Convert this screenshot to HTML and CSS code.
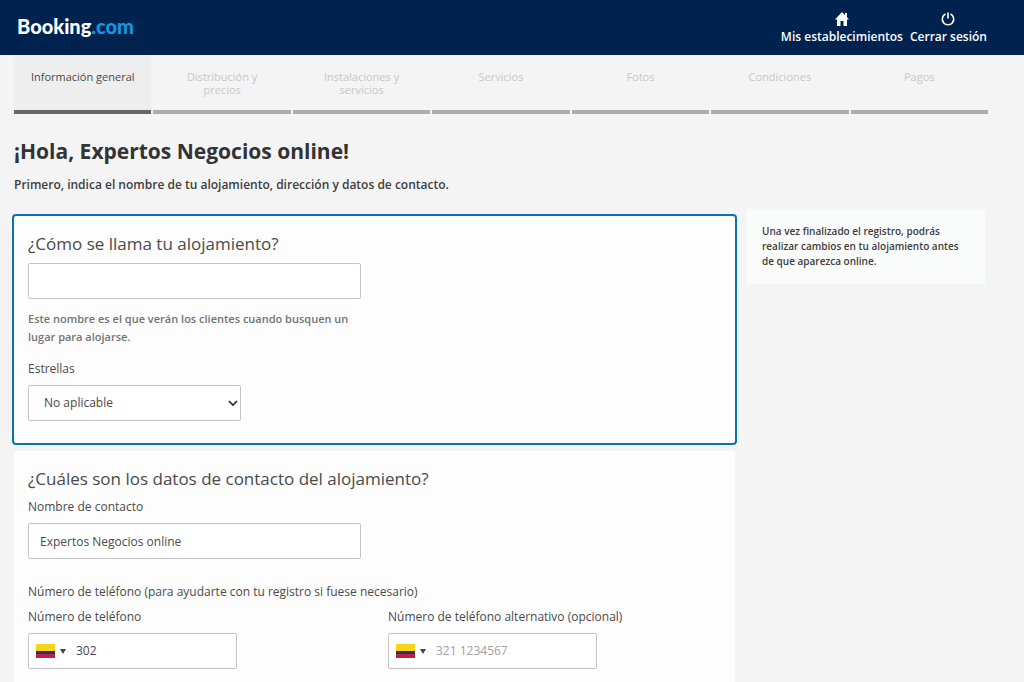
FILE: index.html
```html
<!DOCTYPE html>
<html lang="es">
<head>
<meta charset="utf-8">
<meta name="viewport" content="width=device-width, initial-scale=1">
<title>Booking.com – Información general</title>
<link rel="stylesheet" href="styles.css">
</head>
<body>
<header class="topbar">
  <a class="logo" href="#">Booking<span class="logo-tld">.com</span></a>
  <nav class="account">
    <a class="account-link" href="#">
      <svg class="icon" viewBox="0 0 16 16" aria-hidden="true"><path fill="currentColor" d="M8 1 1 8.500h2V15h3.500v-5h3v5H13V8.500h2l-2-2.200V2h-2v2.200z"/></svg>
      <span>Mis establecimientos</span>
    </a>
    <a class="account-link" href="#">
      <svg class="icon" viewBox="0 0 16 16" aria-hidden="true"><path fill="none" stroke="currentColor" stroke-width="1.600" d="M5.500 3a5.700 5.700 0 1 0 5 0M8 1.500v6"/></svg>
      <span>Cerrar sesión</span>
    </a>
  </nav>
</header>
<nav class="steps">
  <a class="step step-current" href="#" aria-current="step">Información general</a>
  <a class="step" href="#">Distribución y precios</a>
  <a class="step" href="#">Instalaciones y servicios</a>
  <a class="step" href="#">Servicios</a>
  <a class="step" href="#">Fotos</a>
  <a class="step" href="#">Condiciones</a>
  <a class="step" href="#">Pagos</a>
</nav>
<main class="page">
  <h1 class="title">¡Hola, Expertos Negocios online!</h1>
  <p class="intro">Primero, indica el nombre de tu alojamiento, dirección y datos de contacto.</p>
  <div class="columns">
    <form class="cards">
      <section class="card card-active">
        <h2 class="question"><label for="property">¿Cómo se llama tu alojamiento?</label></h2>
        <input class="control wide" id="property" type="text">
        <p class="hint">Este nombre es el que verán los clientes cuando busquen un lugar para alojarse.</p>
        <label class="label" for="stars">Estrellas</label>
        <div class="select-box">
          <select class="control select" id="stars"><option>No aplicable</option><option>1</option><option>2</option><option>3</option><option>4</option><option>5</option></select>
          <svg class="chevron" viewBox="0 0 10 10" aria-hidden="true"><path fill="none" stroke="currentColor" stroke-width="1.600" d="m1 3 4 4 4-4"/></svg>
        </div>
      </section>
      <section class="card">
        <h2 class="question">¿Cuáles son los datos de contacto del alojamiento?</h2>
        <label class="label" for="contact">Nombre de contacto</label>
        <input class="control wide" id="contact" type="text" value="Expertos Negocios online">
        <p class="note">Número de teléfono (para ayudarte con tu registro si fuese necesario)</p>
        <div class="phones">
          <div class="phone">
            <label class="label" for="phone">Número de teléfono</label>
            <div class="phone-box">
              <button class="country" type="button" aria-label="Colombia"><span class="flag"></span><span class="caret"></span></button>
              <input class="phone-input" id="phone" type="tel" value="302">
            </div>
          </div>
          <div class="phone">
            <label class="label" for="phone-alt">Número de teléfono alternativo (opcional)</label>
            <div class="phone-box">
              <button class="country" type="button" aria-label="Colombia"><span class="flag"></span><span class="caret"></span></button>
              <input class="phone-input" id="phone-alt" type="tel" placeholder="321 1234567">
            </div>
          </div>
        </div>
      </section>
    </form>
    <aside class="tip">Una vez finalizado el registro, podrás realizar cambios en tu alojamiento antes de que aparezca online.</aside>
  </div>
</main>
</body>
</html>
```
FILE: styles.css
```css
* {
  box-sizing: border-box;
}

body {
  margin: 0;
  background: #f4f4f4;
  color: #4a4a4a;
  font: 12px/18px "Open Sans", "Noto Sans", sans-serif;
}

h1, h2, p {
  margin: 0;
}

a {
  color: inherit;
  text-decoration: none;
}

.topbar {
  display: flex;
  justify-content: space-between;
  align-items: center;
  min-height: 55px;
  padding: 0 37px 0 17px;
  background: #00224f;
  color: #fff;
}

.logo {
  padding-bottom: 3px;
  font: 900 20px/24px Lato, sans-serif;
}

.logo-tld {
  color: #0d9be5;
}

.account {
  display: flex;
  gap: 7px;
  padding-top: 2px;
}

.account-link {
  display: flex;
  flex-direction: column;
  align-items: center;
  gap: 1px;
  font-weight: 600;
}

.icon {
  width: 16px;
  height: 16px;
}

.steps {
  display: grid;
  grid-template-columns: repeat(7, minmax(0, 1fr));
  gap: 2px;
  margin: 0 36px 0 14px;
}

.step {
  min-height: 59px;
  padding: 15px 24px 12px;
  border-bottom: 4px solid #adadad;
  color: #c8c8c8;
  font-size: 11px;
  line-height: 13px;
  text-align: center;
}

.step-current {
  padding-inline: 8px;
  background: #eee;
  border-color: #666;
  color: #4a4a4a;
}

.page {
  padding: 23px 39px 0 12px;
}

.title {
  padding-left: 2px;
  color: #333;
  font-size: 21px;
  font-weight: 700;
  line-height: 28px;
}

.intro {
  padding: 11px 2px 15px;
  color: #3d3d3d;
  font-weight: 600;
}

.columns {
  display: grid;
  grid-template-columns: minmax(0, 1fr) 238px;
  gap: 10px;
  align-items: start;
}

.cards {
  display: flex;
  flex-direction: column;
  gap: 4px;
  padding-top: 5px;
}

.card {
  padding: 15px 14px 22px;
  border: 2px solid transparent;
  border-radius: 4px;
  background: #fdfdfd;
  background-clip: padding-box;
}

.card-active {
  border-color: #0b71b5;
}

.question {
  margin-bottom: 6px;
  font-size: 17px;
  font-weight: 400;
  line-height: 26px;
}

.label {
  display: block;
  margin-bottom: 7px;
}

.control,
.phone-box {
  height: 36px;
  border: 1px solid #c4c4c8;
  border-radius: 2px;
  background: #fff;
  color: #4a4a4a;
}

.control {
  display: block;
  padding: 0 11px;
  font: inherit;
}

.wide {
  width: 333px;
  max-width: 100%;
}

.hint {
  max-width: 333px;
  padding: 11px 0 14px;
  color: #737373;
  font-size: 11px;
  font-weight: 600;
}

.select-box {
  position: relative;
  width: 213px;
}

.select {
  width: 100%;
  padding: 0 15px;
  appearance: none;
}

.chevron {
  position: absolute;
  top: 13px;
  right: 3px;
  width: 10px;
  height: 10px;
  color: #222;
  pointer-events: none;
}

.note {
  padding: 24px 0 7px;
}

.phones {
  display: grid;
  grid-template-columns: repeat(2, 209px);
  column-gap: 151px;
}

.phone .label {
  white-space: nowrap;
}

.phone-box {
  display: flex;
  align-items: center;
}

.country {
  display: flex;
  align-items: center;
  gap: 5px;
  padding: 0 10px 0 7px;
  border: 0;
  background: none;
}

.flag {
  width: 19px;
  height: 14px;
  background: linear-gradient(#f7d417 0 50%, #2c2f6b 50% 75%, #c01f3d 75%);
}

.caret {
  border: 3px solid transparent;
  border-top: 5px solid #444;
  border-bottom: 0;
}

.phone-input {
  flex: 1;
  min-width: 0;
  padding: 0;
  border: 0;
  background: none;
  color: #4a4a4a;
  font: inherit;
}

.phone-input::placeholder {
  color: #a0a0a0;
}

.tip {
  padding: 15px;
  background: #fafcfc;
  color: #3d3d3d;
  font-size: 10px;
  font-weight: 600;
  line-height: 15px;
}
```
